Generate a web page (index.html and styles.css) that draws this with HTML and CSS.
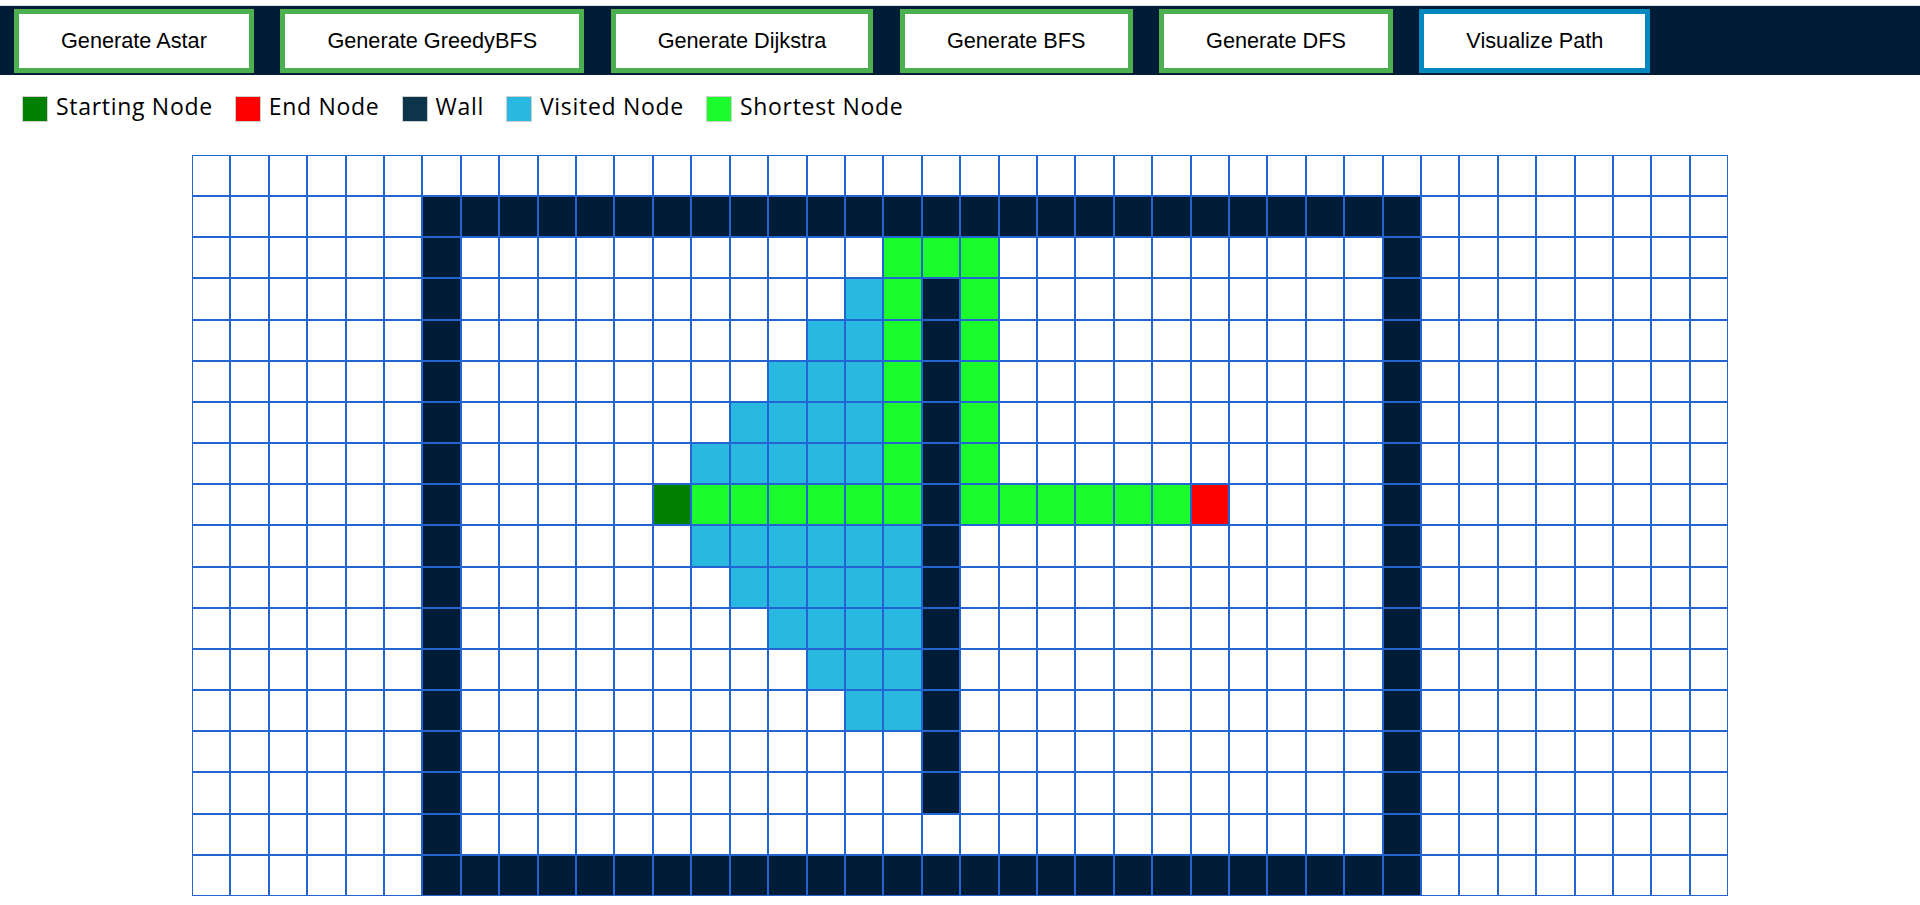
FILE: index.html
```html
<!DOCTYPE html>
<html lang="en">
<head>
<meta charset="utf-8">
<title>Pathfinding Visualizer</title>
<link rel="stylesheet" href="styles.css">
</head>
<body>
<nav class="navbar">
  <button class="btn">Generate Astar</button>
  <button class="btn">Generate GreedyBFS</button>
  <button class="btn">Generate Dijkstra</button>
  <button class="btn">Generate BFS</button>
  <button class="btn">Generate DFS</button>
  <button class="btn btn-visualize">Visualize Path</button>
</nav>
<div class="legend">
  <div class="legend-item"><span class="swatch swatch-start"></span><span class="legend-label">Starting Node</span></div>
  <div class="legend-item"><span class="swatch swatch-end"></span><span class="legend-label">End Node</span></div>
  <div class="legend-item"><span class="swatch swatch-wall"></span><span class="legend-label">Wall</span></div>
  <div class="legend-item"><span class="swatch swatch-visited"></span><span class="legend-label">Visited Node</span></div>
  <div class="legend-item"><span class="swatch swatch-path"></span><span class="legend-label">Shortest Node</span></div>
</div>
<div class="grid">
<div class="row"><span class="cell"></span><span class="cell"></span><span class="cell"></span><span class="cell"></span><span class="cell"></span><span class="cell"></span><span class="cell"></span><span class="cell"></span><span class="cell"></span><span class="cell"></span><span class="cell"></span><span class="cell"></span><span class="cell"></span><span class="cell"></span><span class="cell"></span><span class="cell"></span><span class="cell"></span><span class="cell"></span><span class="cell"></span><span class="cell"></span><span class="cell"></span><span class="cell"></span><span class="cell"></span><span class="cell"></span><span class="cell"></span><span class="cell"></span><span class="cell"></span><span class="cell"></span><span class="cell"></span><span class="cell"></span><span class="cell"></span><span class="cell"></span><span class="cell"></span><span class="cell"></span><span class="cell"></span><span class="cell"></span><span class="cell"></span><span class="cell"></span><span class="cell"></span><span class="cell"></span></div>
<div class="row"><span class="cell"></span><span class="cell"></span><span class="cell"></span><span class="cell"></span><span class="cell"></span><span class="cell"></span><span class="cell wall"></span><span class="cell wall"></span><span class="cell wall"></span><span class="cell wall"></span><span class="cell wall"></span><span class="cell wall"></span><span class="cell wall"></span><span class="cell wall"></span><span class="cell wall"></span><span class="cell wall"></span><span class="cell wall"></span><span class="cell wall"></span><span class="cell wall"></span><span class="cell wall"></span><span class="cell wall"></span><span class="cell wall"></span><span class="cell wall"></span><span class="cell wall"></span><span class="cell wall"></span><span class="cell wall"></span><span class="cell wall"></span><span class="cell wall"></span><span class="cell wall"></span><span class="cell wall"></span><span class="cell wall"></span><span class="cell wall"></span><span class="cell"></span><span class="cell"></span><span class="cell"></span><span class="cell"></span><span class="cell"></span><span class="cell"></span><span class="cell"></span><span class="cell"></span></div>
<div class="row"><span class="cell"></span><span class="cell"></span><span class="cell"></span><span class="cell"></span><span class="cell"></span><span class="cell"></span><span class="cell wall"></span><span class="cell"></span><span class="cell"></span><span class="cell"></span><span class="cell"></span><span class="cell"></span><span class="cell"></span><span class="cell"></span><span class="cell"></span><span class="cell"></span><span class="cell"></span><span class="cell"></span><span class="cell path"></span><span class="cell path"></span><span class="cell path"></span><span class="cell"></span><span class="cell"></span><span class="cell"></span><span class="cell"></span><span class="cell"></span><span class="cell"></span><span class="cell"></span><span class="cell"></span><span class="cell"></span><span class="cell"></span><span class="cell wall"></span><span class="cell"></span><span class="cell"></span><span class="cell"></span><span class="cell"></span><span class="cell"></span><span class="cell"></span><span class="cell"></span><span class="cell"></span></div>
<div class="row"><span class="cell"></span><span class="cell"></span><span class="cell"></span><span class="cell"></span><span class="cell"></span><span class="cell"></span><span class="cell wall"></span><span class="cell"></span><span class="cell"></span><span class="cell"></span><span class="cell"></span><span class="cell"></span><span class="cell"></span><span class="cell"></span><span class="cell"></span><span class="cell"></span><span class="cell"></span><span class="cell visited"></span><span class="cell path"></span><span class="cell wall"></span><span class="cell path"></span><span class="cell"></span><span class="cell"></span><span class="cell"></span><span class="cell"></span><span class="cell"></span><span class="cell"></span><span class="cell"></span><span class="cell"></span><span class="cell"></span><span class="cell"></span><span class="cell wall"></span><span class="cell"></span><span class="cell"></span><span class="cell"></span><span class="cell"></span><span class="cell"></span><span class="cell"></span><span class="cell"></span><span class="cell"></span></div>
<div class="row"><span class="cell"></span><span class="cell"></span><span class="cell"></span><span class="cell"></span><span class="cell"></span><span class="cell"></span><span class="cell wall"></span><span class="cell"></span><span class="cell"></span><span class="cell"></span><span class="cell"></span><span class="cell"></span><span class="cell"></span><span class="cell"></span><span class="cell"></span><span class="cell"></span><span class="cell visited"></span><span class="cell visited"></span><span class="cell path"></span><span class="cell wall"></span><span class="cell path"></span><span class="cell"></span><span class="cell"></span><span class="cell"></span><span class="cell"></span><span class="cell"></span><span class="cell"></span><span class="cell"></span><span class="cell"></span><span class="cell"></span><span class="cell"></span><span class="cell wall"></span><span class="cell"></span><span class="cell"></span><span class="cell"></span><span class="cell"></span><span class="cell"></span><span class="cell"></span><span class="cell"></span><span class="cell"></span></div>
<div class="row"><span class="cell"></span><span class="cell"></span><span class="cell"></span><span class="cell"></span><span class="cell"></span><span class="cell"></span><span class="cell wall"></span><span class="cell"></span><span class="cell"></span><span class="cell"></span><span class="cell"></span><span class="cell"></span><span class="cell"></span><span class="cell"></span><span class="cell"></span><span class="cell visited"></span><span class="cell visited"></span><span class="cell visited"></span><span class="cell path"></span><span class="cell wall"></span><span class="cell path"></span><span class="cell"></span><span class="cell"></span><span class="cell"></span><span class="cell"></span><span class="cell"></span><span class="cell"></span><span class="cell"></span><span class="cell"></span><span class="cell"></span><span class="cell"></span><span class="cell wall"></span><span class="cell"></span><span class="cell"></span><span class="cell"></span><span class="cell"></span><span class="cell"></span><span class="cell"></span><span class="cell"></span><span class="cell"></span></div>
<div class="row"><span class="cell"></span><span class="cell"></span><span class="cell"></span><span class="cell"></span><span class="cell"></span><span class="cell"></span><span class="cell wall"></span><span class="cell"></span><span class="cell"></span><span class="cell"></span><span class="cell"></span><span class="cell"></span><span class="cell"></span><span class="cell"></span><span class="cell visited"></span><span class="cell visited"></span><span class="cell visited"></span><span class="cell visited"></span><span class="cell path"></span><span class="cell wall"></span><span class="cell path"></span><span class="cell"></span><span class="cell"></span><span class="cell"></span><span class="cell"></span><span class="cell"></span><span class="cell"></span><span class="cell"></span><span class="cell"></span><span class="cell"></span><span class="cell"></span><span class="cell wall"></span><span class="cell"></span><span class="cell"></span><span class="cell"></span><span class="cell"></span><span class="cell"></span><span class="cell"></span><span class="cell"></span><span class="cell"></span></div>
<div class="row"><span class="cell"></span><span class="cell"></span><span class="cell"></span><span class="cell"></span><span class="cell"></span><span class="cell"></span><span class="cell wall"></span><span class="cell"></span><span class="cell"></span><span class="cell"></span><span class="cell"></span><span class="cell"></span><span class="cell"></span><span class="cell visited"></span><span class="cell visited"></span><span class="cell visited"></span><span class="cell visited"></span><span class="cell visited"></span><span class="cell path"></span><span class="cell wall"></span><span class="cell path"></span><span class="cell"></span><span class="cell"></span><span class="cell"></span><span class="cell"></span><span class="cell"></span><span class="cell"></span><span class="cell"></span><span class="cell"></span><span class="cell"></span><span class="cell"></span><span class="cell wall"></span><span class="cell"></span><span class="cell"></span><span class="cell"></span><span class="cell"></span><span class="cell"></span><span class="cell"></span><span class="cell"></span><span class="cell"></span></div>
<div class="row"><span class="cell"></span><span class="cell"></span><span class="cell"></span><span class="cell"></span><span class="cell"></span><span class="cell"></span><span class="cell wall"></span><span class="cell"></span><span class="cell"></span><span class="cell"></span><span class="cell"></span><span class="cell"></span><span class="cell start"></span><span class="cell path"></span><span class="cell path"></span><span class="cell path"></span><span class="cell path"></span><span class="cell path"></span><span class="cell path"></span><span class="cell wall"></span><span class="cell path"></span><span class="cell path"></span><span class="cell path"></span><span class="cell path"></span><span class="cell path"></span><span class="cell path"></span><span class="cell end"></span><span class="cell"></span><span class="cell"></span><span class="cell"></span><span class="cell"></span><span class="cell wall"></span><span class="cell"></span><span class="cell"></span><span class="cell"></span><span class="cell"></span><span class="cell"></span><span class="cell"></span><span class="cell"></span><span class="cell"></span></div>
<div class="row"><span class="cell"></span><span class="cell"></span><span class="cell"></span><span class="cell"></span><span class="cell"></span><span class="cell"></span><span class="cell wall"></span><span class="cell"></span><span class="cell"></span><span class="cell"></span><span class="cell"></span><span class="cell"></span><span class="cell"></span><span class="cell visited"></span><span class="cell visited"></span><span class="cell visited"></span><span class="cell visited"></span><span class="cell visited"></span><span class="cell visited"></span><span class="cell wall"></span><span class="cell"></span><span class="cell"></span><span class="cell"></span><span class="cell"></span><span class="cell"></span><span class="cell"></span><span class="cell"></span><span class="cell"></span><span class="cell"></span><span class="cell"></span><span class="cell"></span><span class="cell wall"></span><span class="cell"></span><span class="cell"></span><span class="cell"></span><span class="cell"></span><span class="cell"></span><span class="cell"></span><span class="cell"></span><span class="cell"></span></div>
<div class="row"><span class="cell"></span><span class="cell"></span><span class="cell"></span><span class="cell"></span><span class="cell"></span><span class="cell"></span><span class="cell wall"></span><span class="cell"></span><span class="cell"></span><span class="cell"></span><span class="cell"></span><span class="cell"></span><span class="cell"></span><span class="cell"></span><span class="cell visited"></span><span class="cell visited"></span><span class="cell visited"></span><span class="cell visited"></span><span class="cell visited"></span><span class="cell wall"></span><span class="cell"></span><span class="cell"></span><span class="cell"></span><span class="cell"></span><span class="cell"></span><span class="cell"></span><span class="cell"></span><span class="cell"></span><span class="cell"></span><span class="cell"></span><span class="cell"></span><span class="cell wall"></span><span class="cell"></span><span class="cell"></span><span class="cell"></span><span class="cell"></span><span class="cell"></span><span class="cell"></span><span class="cell"></span><span class="cell"></span></div>
<div class="row"><span class="cell"></span><span class="cell"></span><span class="cell"></span><span class="cell"></span><span class="cell"></span><span class="cell"></span><span class="cell wall"></span><span class="cell"></span><span class="cell"></span><span class="cell"></span><span class="cell"></span><span class="cell"></span><span class="cell"></span><span class="cell"></span><span class="cell"></span><span class="cell visited"></span><span class="cell visited"></span><span class="cell visited"></span><span class="cell visited"></span><span class="cell wall"></span><span class="cell"></span><span class="cell"></span><span class="cell"></span><span class="cell"></span><span class="cell"></span><span class="cell"></span><span class="cell"></span><span class="cell"></span><span class="cell"></span><span class="cell"></span><span class="cell"></span><span class="cell wall"></span><span class="cell"></span><span class="cell"></span><span class="cell"></span><span class="cell"></span><span class="cell"></span><span class="cell"></span><span class="cell"></span><span class="cell"></span></div>
<div class="row"><span class="cell"></span><span class="cell"></span><span class="cell"></span><span class="cell"></span><span class="cell"></span><span class="cell"></span><span class="cell wall"></span><span class="cell"></span><span class="cell"></span><span class="cell"></span><span class="cell"></span><span class="cell"></span><span class="cell"></span><span class="cell"></span><span class="cell"></span><span class="cell"></span><span class="cell visited"></span><span class="cell visited"></span><span class="cell visited"></span><span class="cell wall"></span><span class="cell"></span><span class="cell"></span><span class="cell"></span><span class="cell"></span><span class="cell"></span><span class="cell"></span><span class="cell"></span><span class="cell"></span><span class="cell"></span><span class="cell"></span><span class="cell"></span><span class="cell wall"></span><span class="cell"></span><span class="cell"></span><span class="cell"></span><span class="cell"></span><span class="cell"></span><span class="cell"></span><span class="cell"></span><span class="cell"></span></div>
<div class="row"><span class="cell"></span><span class="cell"></span><span class="cell"></span><span class="cell"></span><span class="cell"></span><span class="cell"></span><span class="cell wall"></span><span class="cell"></span><span class="cell"></span><span class="cell"></span><span class="cell"></span><span class="cell"></span><span class="cell"></span><span class="cell"></span><span class="cell"></span><span class="cell"></span><span class="cell"></span><span class="cell visited"></span><span class="cell visited"></span><span class="cell wall"></span><span class="cell"></span><span class="cell"></span><span class="cell"></span><span class="cell"></span><span class="cell"></span><span class="cell"></span><span class="cell"></span><span class="cell"></span><span class="cell"></span><span class="cell"></span><span class="cell"></span><span class="cell wall"></span><span class="cell"></span><span class="cell"></span><span class="cell"></span><span class="cell"></span><span class="cell"></span><span class="cell"></span><span class="cell"></span><span class="cell"></span></div>
<div class="row"><span class="cell"></span><span class="cell"></span><span class="cell"></span><span class="cell"></span><span class="cell"></span><span class="cell"></span><span class="cell wall"></span><span class="cell"></span><span class="cell"></span><span class="cell"></span><span class="cell"></span><span class="cell"></span><span class="cell"></span><span class="cell"></span><span class="cell"></span><span class="cell"></span><span class="cell"></span><span class="cell"></span><span class="cell"></span><span class="cell wall"></span><span class="cell"></span><span class="cell"></span><span class="cell"></span><span class="cell"></span><span class="cell"></span><span class="cell"></span><span class="cell"></span><span class="cell"></span><span class="cell"></span><span class="cell"></span><span class="cell"></span><span class="cell wall"></span><span class="cell"></span><span class="cell"></span><span class="cell"></span><span class="cell"></span><span class="cell"></span><span class="cell"></span><span class="cell"></span><span class="cell"></span></div>
<div class="row"><span class="cell"></span><span class="cell"></span><span class="cell"></span><span class="cell"></span><span class="cell"></span><span class="cell"></span><span class="cell wall"></span><span class="cell"></span><span class="cell"></span><span class="cell"></span><span class="cell"></span><span class="cell"></span><span class="cell"></span><span class="cell"></span><span class="cell"></span><span class="cell"></span><span class="cell"></span><span class="cell"></span><span class="cell"></span><span class="cell wall"></span><span class="cell"></span><span class="cell"></span><span class="cell"></span><span class="cell"></span><span class="cell"></span><span class="cell"></span><span class="cell"></span><span class="cell"></span><span class="cell"></span><span class="cell"></span><span class="cell"></span><span class="cell wall"></span><span class="cell"></span><span class="cell"></span><span class="cell"></span><span class="cell"></span><span class="cell"></span><span class="cell"></span><span class="cell"></span><span class="cell"></span></div>
<div class="row"><span class="cell"></span><span class="cell"></span><span class="cell"></span><span class="cell"></span><span class="cell"></span><span class="cell"></span><span class="cell wall"></span><span class="cell"></span><span class="cell"></span><span class="cell"></span><span class="cell"></span><span class="cell"></span><span class="cell"></span><span class="cell"></span><span class="cell"></span><span class="cell"></span><span class="cell"></span><span class="cell"></span><span class="cell"></span><span class="cell"></span><span class="cell"></span><span class="cell"></span><span class="cell"></span><span class="cell"></span><span class="cell"></span><span class="cell"></span><span class="cell"></span><span class="cell"></span><span class="cell"></span><span class="cell"></span><span class="cell"></span><span class="cell wall"></span><span class="cell"></span><span class="cell"></span><span class="cell"></span><span class="cell"></span><span class="cell"></span><span class="cell"></span><span class="cell"></span><span class="cell"></span></div>
<div class="row"><span class="cell"></span><span class="cell"></span><span class="cell"></span><span class="cell"></span><span class="cell"></span><span class="cell"></span><span class="cell wall"></span><span class="cell wall"></span><span class="cell wall"></span><span class="cell wall"></span><span class="cell wall"></span><span class="cell wall"></span><span class="cell wall"></span><span class="cell wall"></span><span class="cell wall"></span><span class="cell wall"></span><span class="cell wall"></span><span class="cell wall"></span><span class="cell wall"></span><span class="cell wall"></span><span class="cell wall"></span><span class="cell wall"></span><span class="cell wall"></span><span class="cell wall"></span><span class="cell wall"></span><span class="cell wall"></span><span class="cell wall"></span><span class="cell wall"></span><span class="cell wall"></span><span class="cell wall"></span><span class="cell wall"></span><span class="cell wall"></span><span class="cell"></span><span class="cell"></span><span class="cell"></span><span class="cell"></span><span class="cell"></span><span class="cell"></span><span class="cell"></span><span class="cell"></span></div>
</div>
</body>
</html>
```
FILE: styles.css
```css
* {
  box-sizing: border-box;
}

body {
  margin: 0;
  background: #ffffff;
  font-family: "Liberation Sans", Arial, sans-serif;
}

.navbar {
  margin-top: 5px;
  border-top: 1px solid #dedede;
  height: 70px;
  background: #011c37;
  display: flex;
  align-items: flex-start;
  gap: 26.5px;
  padding: 3px 0 0 14px;
}

.btn {
  height: 64px;
  padding: 0 42px;
  border: 5px solid #4caf50;
  background: #ffffff;
  color: #000000;
  font-family: "Liberation Sans", Arial, sans-serif;
  font-size: 21.7px;
  white-space: nowrap;
  cursor: pointer;
}

.btn-visualize {
  border-color: #0088bf;
}

.legend {
  display: flex;
  align-items: center;
  height: 27px;
  margin-top: 20px;
  padding-left: 22px;
}

.legend-item {
  display: flex;
  align-items: center;
  gap: 8px;
  margin-right: 22px;
}

.swatch {
  width: 26px;
  height: 26px;
  border: 1px solid #cfcfcf;
}

.swatch-start { background: #008000; }
.swatch-end { background: #ff0000; }
.swatch-wall { background: #0e3449; }
.swatch-visited { background: #29b9e0; }
.swatch-path { background: #1bfc2c; }

.legend-label {
  font-family: "Open Sans", sans-serif;
  font-size: 23px;
  letter-spacing: 0.7px;
  color: #000000;
  line-height: 27px;
  padding-bottom: 5px;
}

.grid {
  width: 80%;
  margin: 33px auto 0;
}

.row {
  display: flex;
  height: 41.1667px;
}

.cell {
  flex: 1 1 0;
  border: 1px solid #2264d1;
  background: #ffffff;
}

.cell.wall { background: #011c37; }
.cell.visited { background: #29b9e0; }
.cell.path { background: #1bfc2c; }
.cell.start { background: #008000; }
.cell.end { background: #ff0000; }
```
